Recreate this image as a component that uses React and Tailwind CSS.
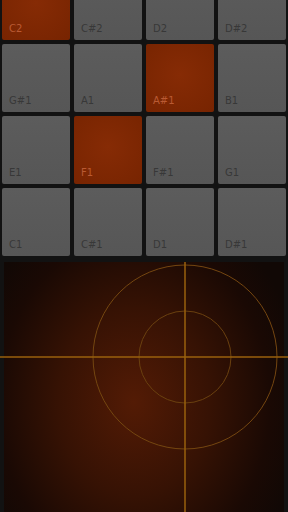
import React from "react";

const rows = [
  ["C2", "C#2", "D2", "D#2"],
  ["G#1", "A1", "A#1", "B1"],
  ["E1", "F1", "F#1", "G1"],
  ["C1", "C#1", "D1", "D#1"],
];

const active = ["C2", "A#1", "F1"];

function Pad({ note }) {
  const on = active.includes(note);
  return (
    <div
      className={`flex flex-col justify-end rounded-[2px] pl-[7px] pb-[5px] ${
        on
          ? "bg-[radial-gradient(circle_at_50%_45%,#862b05,#772401)] text-[#b95a33]"
          : "bg-[linear-gradient(#5c5c5c,#565656)] text-[#383838]"
      }`}
    >
      <span className="text-[10px] leading-[12px] font-['DejaVu_Sans',sans-serif]">{note}</span>
    </div>
  );
}

function XYPad() {
  return (
    <div className="relative flex-1 mt-[6px]">
      <div className="absolute inset-0 mx-[4px] bg-[radial-gradient(ellipse_170px_210px_at_130px_140px,#531b05_0%,#361204_45%,#1a0904_80%,#110805_100%)]" />
      <svg className="absolute inset-0" width="288" height="250" viewBox="0 0 288 250">
        <circle cx="185" cy="95" r="92" fill="none" stroke="#744610" strokeWidth="1" />
        <circle cx="185" cy="95" r="46" fill="none" stroke="#6a400f" strokeWidth="1" />
        <line x1="0" y1="95" x2="288" y2="95" stroke="#9a600c" strokeWidth="1.5" />
        <line x1="185" y1="0" x2="185" y2="250" stroke="#9a600c" strokeWidth="1.5" />
      </svg>
    </div>
  );
}

export default function App() {
  return (
    <div className="w-[288px] h-[512px] overflow-hidden bg-[#121212] flex flex-col">
      <div className="grid grid-cols-4 auto-rows-[68px] gap-[4px] px-[2px] -mt-[28px]">
        {rows.flat().map((note) => (
          <Pad key={note} note={note} />
        ))}
      </div>
      <XYPad />
    </div>
  );
}
